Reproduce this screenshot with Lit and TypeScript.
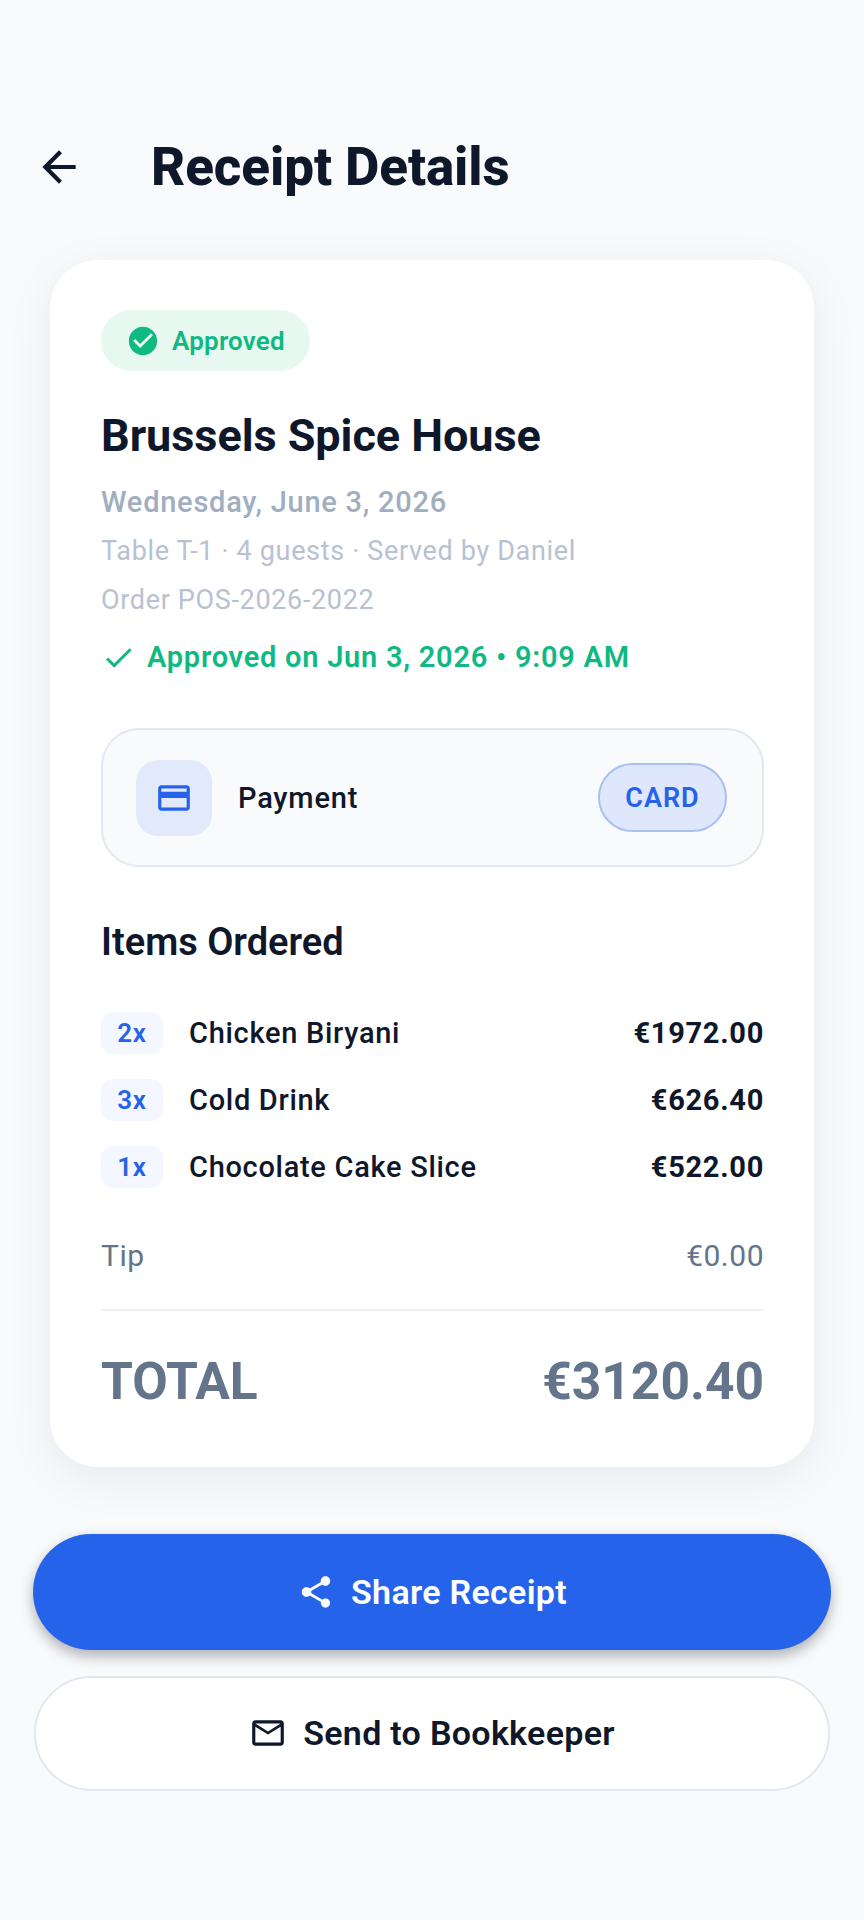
import { LitElement, html, css } from "lit"
import { customElement } from "lit/decorators.js"

const items = [
  { qty: "2x", name: "Chicken Biryani", price: "€1972.00" },
  { qty: "3x", name: "Cold Drink", price: "€626.40" },
  { qty: "1x", name: "Chocolate Cake Slice", price: "€522.00" }
]

@customElement("app-root")
export class AppRoot extends LitElement {
  static styles = css`
    :host {
      display: block;
      height: 1920px;
      background: #f8fafc;
      font-family: Roboto, "Liberation Sans", sans-serif;
      color: #0f172a;
      overflow: hidden;
    }

    .header {
      display: flex;
      align-items: center;
      height: 70px;
      padding: 132px 0 0 34px;
      gap: 67px;
    }

    .back {
      width: 50px;
      height: 50px;
      flex: none;
    }

    h1 {
      margin: 0;
      font-size: 53px;
      font-weight: 800;
      letter-spacing: -0.1px;
      line-height: 70px;
    }

    .card {
      margin: 58px 50px 0;
      padding: 50px 50px 0 51px;
      height: 1157px;
      background: #fff;
      border-radius: 48px;
      box-shadow: 0 12px 48px rgba(15, 23, 42, 0.07);
    }

    .badge {
      display: inline-flex;
      align-items: center;
      gap: 12px;
      height: 61px;
      padding: 0 25px;
      border-radius: 31px;
      background: #e7f8f1;
      color: #10b981;
      font-size: 26px;
      font-weight: 600;
      letter-spacing: 0.2px;
      box-sizing: border-box;
    }

    .badge svg {
      width: 34px;
      height: 34px;
    }

    h2 {
      margin: 36px 0 0;
      font-size: 45px;
      font-weight: 700;
      letter-spacing: -0.05px;
      line-height: 58px;
    }

    .date {
      margin-top: 13px;
      font-size: 29px;
      font-weight: 500;
      line-height: 48px;
      color: #a0aec0;
      letter-spacing: 0.75px;
    }

    .meta {
      margin-top: 1px;
      font-size: 27px;
      line-height: 48px;
      color: #b8c1d1;
      letter-spacing: 0.66px;
    }

    .approved {
      display: flex;
      align-items: center;
      gap: 11px;
      margin-top: 9px;
      color: #10b981;
      font-size: 29px;
      font-weight: 600;
      line-height: 48px;
      letter-spacing: 0.75px;
    }

    .approved svg {
      width: 35px;
      height: 35px;
    }

    .payment {
      display: flex;
      align-items: center;
      height: 139px;
      margin-top: 47px;
      padding: 0 35px 0 33px;
      box-sizing: border-box;
      border: 2px solid #e2e8f0;
      border-radius: 38px;
      background: #f8fafc;
    }

    .pay-icon {
      display: flex;
      align-items: center;
      justify-content: center;
      width: 76px;
      height: 76px;
      border-radius: 22px;
      background: #e2e9fa;
    }

    .pay-icon svg {
      width: 38px;
      height: 38px;
    }

    .pay-label {
      flex: 1;
      margin-left: 26px;
      font-size: 29px;
      font-weight: 500;
      letter-spacing: 0.8px;
    }

    .pay-chip {
      display: flex;
      align-items: center;
      justify-content: center;
      width: 129px;
      height: 69px;
      box-sizing: border-box;
      border: 2px solid #a9c0f5;
      border-radius: 35px;
      background: #dee7fb;
      color: #2563eb;
      font-size: 27px;
      font-weight: 600;
      letter-spacing: 1px;
    }

    h3 {
      margin: 51px 0 0;
      font-size: 38px;
      font-weight: 600;
      line-height: 48px;
    }

    .items {
      display: flex;
      flex-direction: column;
      gap: 25px;
      margin-top: 46px;
    }

    .row {
      display: flex;
      align-items: center;
      height: 42px;
      font-size: 29px;
      letter-spacing: 0.7px;
    }

    .qty {
      display: flex;
      align-items: center;
      justify-content: center;
      width: 62px;
      height: 42px;
      margin-right: 26px;
      border-radius: 12px;
      background: #f4f7ff;
      color: #2563eb;
      font-size: 26px;
      font-weight: 600;
    }

    .name {
      flex: 1;
      font-weight: 500;
    }

    .price {
      font-weight: 700;
    }

    .tip {
      display: flex;
      justify-content: space-between;
      margin-top: 50px;
      font-size: 30px;
      line-height: 36px;
      color: #64748b;
      letter-spacing: 0.5px;
    }

    .divider {
      height: 2px;
      margin-top: 35px;
      background: #eef0f5;
    }

    .total {
      display: flex;
      justify-content: space-between;
      margin-top: 39px;
      font-size: 51.5px;
      font-weight: 700;
      line-height: 64px;
      color: #64748b;
    }

    .actions {
      display: flex;
      flex-direction: column;
      gap: 26px;
      margin: 67px 34px 0;
    }

    .btn {
      display: flex;
      align-items: center;
      justify-content: center;
      gap: 16px;
      height: 115px;
      box-sizing: border-box;
      border-radius: 58px;
      font-size: 34px;
      font-weight: 600;
      letter-spacing: 0.3px;
    }

    .btn svg {
      width: 38px;
      height: 38px;
    }

    .primary {
      height: 116px;
      margin: 0 -1px;
      background: #2563eb;
      color: #fff;
      box-shadow: 0 6px 14px rgba(0, 0, 0, 0.3);
    }

    .secondary {
      padding-bottom: 2px;
      background: #fff;
      border: 2px solid #e2e8f0;
    }
  `

  render() {
    return html`
      <div class="header">
        <svg class="back" viewBox="0 0 24 24" fill="#0f172a">
          <path d="M20 11H7.83l5.59-5.59L12 4l-8 8 8 8 1.41-1.41L7.83 13H20v-2z" />
        </svg>
        <h1>Receipt Details</h1>
      </div>
      <div class="card">
        <div class="badge">
          <svg viewBox="0 0 24 24" fill="#10b981">
            <path d="M12 2C6.48 2 2 6.48 2 12s4.48 10 10 10 10-4.48 10-10S17.52 2 12 2zm-2 15l-5-5 1.41-1.41L10 14.17l7.59-7.59L19 8l-9 9z" />
          </svg>
          Approved
        </div>
        <h2>Brussels Spice House</h2>
        <div class="date">Wednesday, June 3, 2026</div>
        <div class="meta">Table T-1 · 4 guests · Served by Daniel</div>
        <div class="meta">Order POS-2026-2022</div>
        <div class="approved">
          <svg viewBox="0 0 24 24" fill="#10b981">
            <path d="M9 16.17 4.83 12l-1.42 1.41L9 19 21 7l-1.41-1.41z" />
          </svg>
          Approved on Jun 3, 2026 • 9:09 AM
        </div>
        <div class="payment">
          <div class="pay-icon">
            <svg viewBox="0 0 24 24" fill="#2563eb">
              <path d="M20 4H4c-1.11 0-1.99.89-1.99 2L2 18c0 1.11.89 2 2 2h16c1.11 0 2-.89 2-2V6c0-1.11-.89-2-2-2zm0 14H4v-6h16v6zm0-10H4V6h16v2z" />
            </svg>
          </div>
          <div class="pay-label">Payment</div>
          <div class="pay-chip">CARD</div>
        </div>
        <h3>Items Ordered</h3>
        <div class="items">
          ${items.map(item => html`
            <div class="row">
              <div class="qty">${item.qty}</div>
              <div class="name">${item.name}</div>
              <div class="price">${item.price}</div>
            </div>
          `)}
        </div>
        <div class="tip"><span>Tip</span><span>€0.00</span></div>
        <div class="divider"></div>
        <div class="total"><span>TOTAL</span><span>€3120.40</span></div>
      </div>
      <div class="actions">
        <div class="btn primary">
          <svg viewBox="0 0 24 24" fill="#fff">
            <path d="M18 16.08c-.76 0-1.44.3-1.96.77L8.91 12.7c.05-.23.09-.46.09-.7s-.04-.47-.09-.7l7.05-4.11c.54.5 1.25.81 2.04.81 1.66 0 3-1.34 3-3s-1.34-3-3-3-3 1.34-3 3c0 .24.04.47.09.7L8.04 9.81C7.5 9.31 6.79 9 6 9c-1.66 0-3 1.34-3 3s1.34 3 3 3c.79 0 1.5-.31 2.04-.81l7.12 4.16c-.05.21-.08.43-.08.65 0 1.61 1.31 2.92 2.92 2.92s2.92-1.31 2.92-2.92-1.31-2.92-2.92-2.92z" />
          </svg>
          Share Receipt
        </div>
        <div class="btn secondary">
          <svg viewBox="0 0 24 24" fill="#0f172a">
            <path d="M22 6c0-1.1-.9-2-2-2H4c-1.1 0-2 .9-2 2v12c0 1.1.9 2 2 2h16c1.1 0 2-.9 2-2V6zm-2 0-8 5-8-5h16zm0 12H4V8l8 5 8-5v10z" />
          </svg>
          Send to Bookkeeper
        </div>
      </div>
    `
  }
}
